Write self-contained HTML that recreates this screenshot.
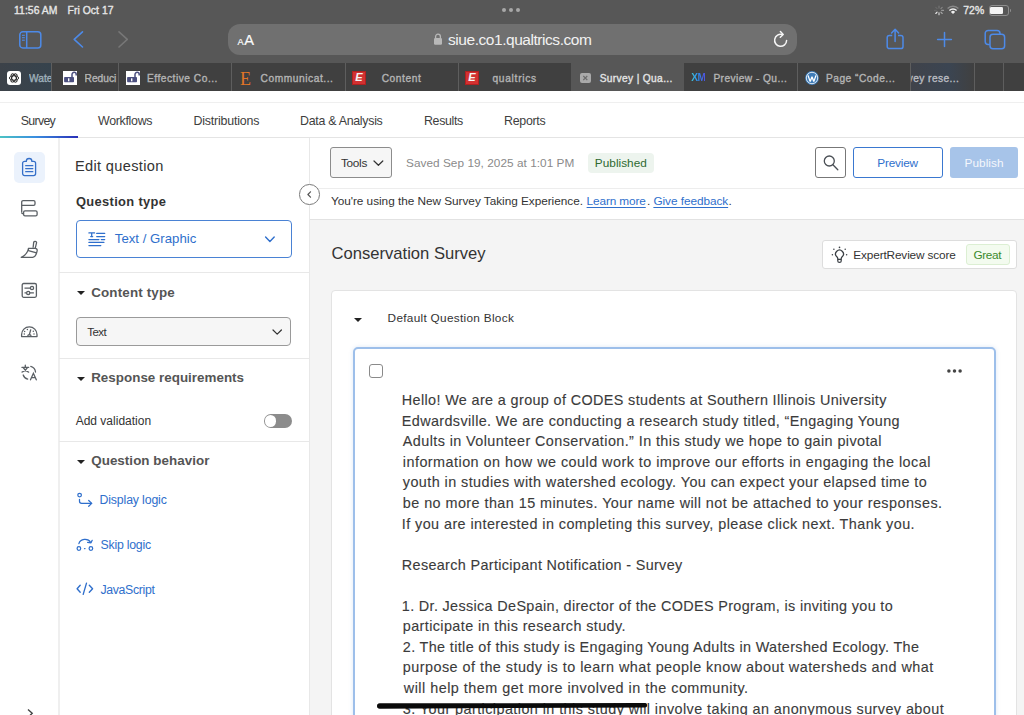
<!DOCTYPE html>
<html><head><meta charset="utf-8">
<style>
*{margin:0;padding:0;box-sizing:border-box}
html,body{width:1024px;height:715px;overflow:hidden;background:#fff;font-family:"Liberation Sans",sans-serif}
.a{position:absolute;white-space:nowrap;line-height:1}
.b{position:absolute}
svg{position:absolute;overflow:visible}
.hl{position:absolute;height:1px;background:#e6e6e6}
.vl{position:absolute;width:1px;background:#e6e6e6}
.sep{position:absolute;top:63px;width:1px;height:28px;background:#5e5e5e}
.tri{position:absolute;width:0;height:0;border-left:4px solid transparent;border-right:4px solid transparent;border-top:4px solid #222}
</style></head><body>
<!-- ============ SAFARI CHROME ============ -->
<div class="b" style="left:0;top:0;width:1024px;height:63px;background:#575757"></div>
<div class="b" style="left:0;top:63px;width:1024px;height:28px;background:#404040"></div>
<!-- first tab tint -->
<div class="b" style="left:0;top:63px;width:51px;height:28px;background:linear-gradient(90deg,#3c4249,#36434d)"></div>
<!-- active tab -->
<div class="b" style="left:571px;top:63px;width:113px;height:28px;background:#575757"></div>
<!-- dragged tab tint -->
<div class="b" style="left:911px;top:63px;width:63px;height:28px;background:linear-gradient(90deg,#40434a,#3b4552 60%,#404040)"></div>
<div class="sep" style="left:51px"></div>
<div class="sep" style="left:118px"></div>
<div class="sep" style="left:231px"></div>
<div class="sep" style="left:345px"></div>
<div class="sep" style="left:458px"></div>
<div class="sep" style="left:797px"></div>
<div class="sep" style="left:910px"></div>
<div class="sep" style="left:974px"></div>
<div class="sep" style="left:1003px"></div>
<!-- multitask dots -->
<div class="b" style="left:502px;top:8px;width:4px;height:4px;border-radius:2px;background:#a8a8a8"></div>
<div class="b" style="left:509px;top:8px;width:4px;height:4px;border-radius:2px;background:#a8a8a8"></div>
<div class="b" style="left:516px;top:8px;width:4px;height:4px;border-radius:2px;background:#a8a8a8"></div>
<!-- spinner -->
<svg style="left:934px;top:5px" width="10" height="11" viewBox="0 0 10 11">
 <g stroke-width="1.1" stroke-linecap="round">
  <line x1="5" y1="1" x2="5" y2="3" stroke="#777"/>
  <line x1="8.2" y1="2.3" x2="6.9" y2="3.6" stroke="#888"/>
  <line x1="9.5" y1="5.4" x2="7.6" y2="5.4" stroke="#999"/>
  <line x1="8.2" y1="8.5" x2="6.9" y2="7.2" stroke="#aaa"/>
  <line x1="5" y1="9.8" x2="5" y2="7.8" stroke="#ddd"/>
  <line x1="1.8" y1="8.5" x2="3.1" y2="7.2" stroke="#eee"/>
  <line x1="0.5" y1="5.4" x2="2.4" y2="5.4" stroke="#666"/>
  <line x1="1.8" y1="2.3" x2="3.1" y2="3.6" stroke="#6a6a6a"/>
 </g>
</svg>
<!-- wifi -->
<svg style="left:947px;top:6px" width="12" height="8" viewBox="0 0 12 8">
 <path d="M0.6 2.6 A7.5 7.5 0 0 1 11.4 2.6" fill="none" stroke="#8a8a8a" stroke-width="1.4"/>
 <path d="M2.4 4.5 A5 5 0 0 1 9.6 4.5" fill="none" stroke="#f0f0f0" stroke-width="1.4"/>
 <path d="M6 8 L3.9 5.9 A3 3 0 0 1 8.1 5.9 Z" fill="#f0f0f0"/>
</svg>
<!-- battery -->
<div class="b" style="left:988.5px;top:5px;width:20px;height:10.6px;border:1px solid #8e8e8e;border-radius:3px"></div>
<div class="b" style="left:990.3px;top:7.1px;width:12.5px;height:6.5px;background:#f4f4f4;border-radius:1.2px"></div>
<div class="b" style="left:1009.8px;top:8.6px;width:1.4px;height:3.2px;background:#8e8e8e;border-radius:0 1px 1px 0"></div>
<!-- sidebar icon -->
<svg style="left:18px;top:30px" width="25" height="19" viewBox="0 0 25 19">
 <g fill="none" stroke="#4d8ae8" stroke-width="1.5">
  <rect x="1.8" y="1.8" width="21" height="16.1" rx="3"/>
  <line x1="8.7" y1="1.8" x2="8.7" y2="17.9"/>
 </g>
 <g stroke="#4d8ae8" stroke-width="1.1">
  <line x1="4" y1="5.3" x2="6.8" y2="5.3"/><line x1="4" y1="7.7" x2="6.8" y2="7.7"/><line x1="4" y1="10.2" x2="6.8" y2="10.2"/>
 </g>
</svg>
<!-- back / forward -->
<svg style="left:72px;top:30px" width="12" height="19" viewBox="0 0 12 19">
 <path d="M10.5 1.8 L2.2 9.4 L10.5 17" fill="none" stroke="#4d8ae8" stroke-width="1.6" stroke-linecap="round" stroke-linejoin="round"/>
</svg>
<svg style="left:117px;top:30px" width="12" height="19" viewBox="0 0 12 19">
 <path d="M2 1.8 L10.3 9.4 L2 17" fill="none" stroke="#777" stroke-width="1.6" stroke-linecap="round" stroke-linejoin="round"/>
</svg>
<!-- url bar -->
<div class="b" style="left:227.5px;top:24px;width:569px;height:31px;background:#707070;border-radius:12px"></div>
<div class="a" style="left:237.5px;top:38px;font-size:9.2px;color:#fafafa;-webkit-text-stroke:0.2px #fafafa">A</div>
<div class="a" style="left:244.3px;top:33px;font-size:14.6px;color:#fafafa;-webkit-text-stroke:0.2px #fafafa">A</div>
<!-- lock -->
<svg style="left:433px;top:33px" width="10" height="12" viewBox="0 0 10 12">
 <path d="M2.6 5 V3.6 A2.4 2.4 0 0 1 7.4 3.6 V5" fill="none" stroke="#b8b8b8" stroke-width="1.3"/>
 <rect x="1" y="5" width="8" height="6.8" rx="1.2" fill="#b8b8b8"/>
</svg>
<!-- reload -->
<svg style="left:772px;top:30px" width="17" height="18" viewBox="0 0 17 18">
 <path d="M10.4 4.6 A6 6 0 1 0 14.6 10.5" fill="none" stroke="#f6f6f6" stroke-width="1.5" stroke-linecap="round"/>
 <path d="M8.4 1.6 L11.2 4.5 L8.3 7.2" fill="none" stroke="#f6f6f6" stroke-width="1.5" stroke-linecap="round" stroke-linejoin="round"/>
</svg>
<!-- share -->
<svg style="left:886px;top:28px" width="19" height="22" viewBox="0 0 19 22">
 <path d="M6.2 7.4 H3.4 A2.2 2.2 0 0 0 1.2 9.6 V18.4 A2.2 2.2 0 0 0 3.4 20.6 H14.8 A2.2 2.2 0 0 0 17 18.4 V9.6 A2.2 2.2 0 0 0 14.8 7.4 H12" fill="none" stroke="#4d8ae8" stroke-width="1.5"/>
 <path d="M9.1 13.6 V1.6 M5.6 5 L9.1 1.3 L12.6 5" fill="none" stroke="#4d8ae8" stroke-width="1.5" stroke-linecap="round" stroke-linejoin="round"/>
</svg>
<!-- plus -->
<svg style="left:936px;top:31px" width="17" height="17" viewBox="0 0 17 17">
 <path d="M8.5 1.6 V15.4 M1.6 8.5 H15.4" stroke="#4d8ae8" stroke-width="1.5" stroke-linecap="round"/>
</svg>
<!-- tabs -->
<svg style="left:984px;top:29px" width="22" height="21" viewBox="0 0 22 21">
 <path d="M5.8 15.6 H4.2 A3 3 0 0 1 1.2 12.6 V4.4 A3 3 0 0 1 4.2 1.4 H13 A3 3 0 0 1 16 4.4 V5.2" fill="none" stroke="#4d8ae8" stroke-width="1.5"/>
 <rect x="6" y="5.2" width="14.6" height="14.6" rx="3" fill="none" stroke="#4d8ae8" stroke-width="1.5"/>
</svg>
<!-- favicons -->
<div class="b" style="left:7px;top:70.6px;width:14px;height:14px;background:#fff;border-radius:3px"></div>
<svg style="left:7px;top:70.6px" width="14" height="14" viewBox="0 0 14 14">
 <g fill="none" stroke="#222" stroke-width="0.9">
  <ellipse cx="7" cy="7" rx="4.6" ry="2.2"/>
  <ellipse cx="7" cy="7" rx="4.6" ry="2.2" transform="rotate(60 7 7)"/>
  <ellipse cx="7" cy="7" rx="4.6" ry="2.2" transform="rotate(-60 7 7)"/>
 </g>
</svg>
<div class="b" style="left:63px;top:70.6px;width:14px;height:14px;background:#fff"></div>
<svg style="left:63px;top:70.6px" width="14" height="14" viewBox="0 0 14 14">
 <path d="M9 6 V3.4 A2.1 2.1 0 0 1 13.2 3.4 V4.6" fill="none" stroke="#4c5080" stroke-width="1.5"/>
 <rect x="1.1" y="5.9" width="9.9" height="5.4" rx="0.8" fill="#4c5080"/>
 <rect x="5" y="7.3" width="1.4" height="3" fill="#fff"/>
</svg>
<div class="b" style="left:125.5px;top:70.6px;width:14px;height:14px;background:#fff"></div>
<svg style="left:125.5px;top:70.6px" width="14" height="14" viewBox="0 0 14 14">
 <path d="M9 6 V3.4 A2.1 2.1 0 0 1 13.2 3.4 V4.6" fill="none" stroke="#4c5080" stroke-width="1.5"/>
 <rect x="1.1" y="5.9" width="9.9" height="5.4" rx="0.8" fill="#4c5080"/>
 <rect x="5" y="7.3" width="1.4" height="3" fill="#fff"/>
</svg>
<div class="a" style="left:240px;top:69.5px;font-family:'Liberation Serif',serif;font-size:18px;color:#e27526">E</div>
<div class="b" style="left:352px;top:70.6px;width:14px;height:14px;background:#d23131;border:1px solid #b02020"></div>
<div class="a" style="left:355.3px;top:72.4px;font-size:11px;font-weight:bold;font-style:italic;color:#f4f4f4">E</div>
<div class="b" style="left:465px;top:70.6px;width:14px;height:14px;background:#d23131;border:1px solid #b02020"></div>
<div class="a" style="left:468.3px;top:72.4px;font-size:11px;font-weight:bold;font-style:italic;color:#f4f4f4">E</div>
<div class="b" style="left:580px;top:73px;width:10.6px;height:10px;background:#a9a9a9;border-radius:2px"></div>
<svg style="left:580px;top:73px" width="11" height="10" viewBox="0 0 11 10">
 <path d="M3.3 3 L7.3 7 M7.3 3 L3.3 7" stroke="#6a6a6a" stroke-width="1.1"/>
</svg>
<div class="a" style="left:691.2px;top:73.2px;font-size:10.2px;font-weight:bold;letter-spacing:-0.6px;background:linear-gradient(90deg,#40c8d6,#2f8cf0 50%,#5050e0);-webkit-background-clip:text;background-clip:text;color:transparent">XM</div>
<svg style="left:804.8px;top:70.6px" width="14" height="14" viewBox="0 0 14 14">
 <circle cx="7" cy="7" r="6.9" fill="#3f7cb8"/>
 <circle cx="7" cy="7" r="5.7" fill="none" stroke="#fff" stroke-width="0.8"/>
 <path d="M3 4.4 L5.2 10.6 L7 5.8 L8.8 10.6 L11 4.4" fill="none" stroke="#fff" stroke-width="1.3" stroke-linejoin="bevel"/>
</svg>
<!-- ============ QUALTRICS ============ -->
<div class="hl" style="left:0;top:102px;width:1024px;background:#efefef"></div>
<div class="hl" style="left:0;top:137px;width:1024px;background:#e4e4e4"></div>
<div class="b" style="left:0;top:136.2px;width:78px;height:2px;background:linear-gradient(90deg,#4cc3c4,#3a8fe0 45%,#2a2fb8)"></div>
<!-- rail -->
<div class="vl" style="left:58px;top:138px;width:1.6px;height:577px;background:#efefef"></div>
<div class="b" style="left:14px;top:151.5px;width:31px;height:31px;background:#ebf2fc;border-radius:5px"></div>
<svg style="left:22px;top:158px" width="15" height="19" viewBox="0 0 15 19">
 <path d="M4.3 3.3 H2.6 A2 2 0 0 0 0.6 5.3 V15.6 A2 2 0 0 0 2.6 17.6 H11.6 A2 2 0 0 0 13.6 15.6 V5.3 A2 2 0 0 0 11.6 3.3 H9.9 A2.8 2.8 0 0 0 4.3 3.3 Z" fill="none" stroke="#3670c9" stroke-width="1.3"/>
 <path d="M3.7 7.7 H10.8 M3.7 10.6 H10.8 M3.7 13.7 H10.8" stroke="#3670c9" stroke-width="1.3" stroke-linecap="round"/>
</svg>
<svg style="left:16px;top:194px" width="28" height="28" viewBox="0 0 28 28">
 <g fill="none" stroke="#5a5f64" stroke-width="1.3">
  <path d="M5.7 18.5 V8 A1.4 1.4 0 0 1 7.1 6.6 H17.6 A1.4 1.4 0 0 1 19 8 V10 A1.4 1.4 0 0 1 17.6 11.4 H5.7"/>
  <path d="M5.7 18.5 A1.2 1.2 0 0 0 7.4 19.6"/>
  <rect x="7.6" y="16.9" width="13.5" height="5" rx="1.4"/>
 </g>
</svg>
<svg style="left:16px;top:236px" width="28" height="28" viewBox="0 0 28 28">
 <g fill="none" stroke="#5a5f64" stroke-width="1.3" stroke-linejoin="round">
  <path d="M17.1 11.8 L17.7 6.3 A1.5 1.5 0 0 1 20.6 6.6 L19.2 12.3"/>
  <path d="M12.4 12.4 L19.1 12.3 A2 2 0 0 1 21.2 14.6 L20.6 16.9 L12.4 14.7 Z"/>
  <path d="M12.4 13.4 Q10.4 19.4 5.2 21.3 H16.6 Q19.6 21 20.5 16.9"/>
 </g>
</svg>
<svg style="left:16px;top:276px" width="28" height="28" viewBox="0 0 28 28">
 <g fill="none" stroke="#5a5f64" stroke-width="1.3">
  <rect x="6.2" y="7.5" width="14.2" height="13.8" rx="1.5"/>
  <path d="M8.5 12.2 H14.3 M8.5 16.9 H10.5 M13.8 16.9 H17.9"/>
  <circle cx="16" cy="12" r="1.6"/>
  <circle cx="12.2" cy="16.9" r="1.6"/>
 </g>
</svg>
<svg style="left:16px;top:318px" width="28" height="28" viewBox="0 0 28 28">
 <g fill="none" stroke="#5a5f64" stroke-width="1.3" stroke-linejoin="round">
  <path d="M5.6 18.6 V16.6 A7.7 7.7 0 0 1 21 16.6 V18.6 Z"/>
  <path d="M13.3 16.8 L14.8 11.3"/>
  <path d="M11.6 18.6 L12.2 16.9 H14.6 L15.2 18.6"/>
 </g>
 <g fill="#5a5f64"><circle cx="8.6" cy="13.5" r="0.75"/><circle cx="11.4" cy="11.5" r="0.75"/><circle cx="17.3" cy="13.3" r="0.75"/><circle cx="8.3" cy="16.1" r="0.75"/><circle cx="18" cy="16" r="0.75"/></g>
</svg>
<svg style="left:16px;top:359px" width="28" height="28" viewBox="0 0 28 28">
 <g fill="none" stroke="#5a5f64" stroke-width="1.3" stroke-linecap="round">
  <path d="M9.3 6.2 V8.2 M5.9 8.3 H12.7 M7.2 8.6 Q9.5 12.3 12.6 13.2 M11.4 8.6 Q9.3 12.3 6 13.2"/>
  <path d="M14.8 7.4 A6.5 6.5 0 0 1 19.5 13"/>
  <path d="M7.2 16 A6.5 6.5 0 0 0 11.7 20.2"/>
  <path d="M14.5 20.8 L17.4 14.3 L20.3 20.8 M15.6 18.6 H19.2"/>
 </g>
</svg>
<!-- edit panel -->
<div class="vl" style="left:309px;top:138px;height:577px;background:#e8e8e8"></div>
<div class="b" style="left:75.5px;top:220.2px;width:216.5px;height:37.5px;border:1.2px solid #4a82d4;border-radius:4px"></div>
<svg style="left:84px;top:226px" width="28" height="28" viewBox="0 0 28 28">
 <g stroke="#2f6fcc" stroke-width="1.25" stroke-linecap="round" fill="none">
  <path d="M4.9 6.9 H10.6 M7.7 6.9 V10.6 M6.7 10.6 H8.7"/>
  <path d="M12.7 7.4 H20.7 M12.7 10.6 H20.7 M4.9 13.5 H14.9 M17.3 13.5 H20.7 M4.9 16.4 H19.9 M4.9 19.5 H16.8"/>
 </g>
</svg>
<svg style="left:264px;top:235px" width="12" height="9" viewBox="0 0 12 9">
 <path d="M1.6 2 L5.9 6.4 L10.2 2" fill="none" stroke="#2f6fcc" stroke-width="1.4" stroke-linecap="round" stroke-linejoin="round"/>
</svg>
<div class="hl" style="left:59px;top:272px;width:250px;background:#e8e8e8"></div>
<div class="tri" style="left:76.5px;top:291px"></div>
<div class="b" style="left:75.7px;top:316.5px;width:215.6px;height:29.7px;border:1px solid #9a9a9a;border-radius:4px;background:#f6f6f6"></div>
<svg style="left:271px;top:328px" width="12" height="9" viewBox="0 0 12 9">
 <path d="M2 2 L6.2 6.2 L10.4 2" fill="none" stroke="#333" stroke-width="1.2" stroke-linecap="round" stroke-linejoin="round"/>
</svg>
<div class="hl" style="left:59px;top:358px;width:250px;background:#e8e8e8"></div>
<div class="tri" style="left:76.5px;top:377.2px"></div>
<div class="b" style="left:264px;top:414.2px;width:27.6px;height:13.7px;border-radius:7px;background:#8c8c8c"></div>
<div class="b" style="left:265.2px;top:415.4px;width:11.3px;height:11.3px;border-radius:6px;background:#fff"></div>
<div class="hl" style="left:59px;top:441px;width:250px;background:#e8e8e8"></div>
<div class="tri" style="left:76.5px;top:460px"></div>
<svg style="left:72px;top:486px" width="28" height="28" viewBox="0 0 28 28">
 <g fill="none" stroke="#2f6fcc" stroke-width="1.25" stroke-linecap="round" stroke-linejoin="round">
  <circle cx="7.6" cy="9.1" r="1.8"/>
  <path d="M7.5 13.3 V15.2 A2.1 2.1 0 0 0 9.6 17.3 H19.6"/>
  <path d="M16.7 14.5 L19.7 17.4 L16.7 20.3"/>
 </g>
</svg>
<svg style="left:72px;top:530px" width="28" height="28" viewBox="0 0 28 28">
 <g fill="none" stroke="#2f6fcc" stroke-width="1.25" stroke-linecap="round" stroke-linejoin="round">
  <circle cx="6.9" cy="18.5" r="1.8"/>
  <circle cx="18.9" cy="18.5" r="1.8"/>
  <path d="M12.5 18.5 H13"/>
  <path d="M6.9 13.6 A6.3 5.5 0 0 1 18.6 12.3"/>
  <path d="M15.6 12.3 L19 12.8 L20.2 10.3"/>
 </g>
</svg>
<svg style="left:72px;top:575px" width="28" height="28" viewBox="0 0 28 28">
 <g fill="none" stroke="#2f6fcc" stroke-width="1.35" stroke-linecap="round" stroke-linejoin="round">
  <path d="M8.2 10.2 L5.1 13.7 L8.2 17.3"/>
  <path d="M14.5 8.1 L11.2 19.4"/>
  <path d="M17.3 10.2 L20.6 13.7 L17.3 17.3"/>
 </g>
</svg>
<div class="b" style="left:26.5px;top:707.5px;width:8px;height:8px;overflow:hidden">
<svg style="left:0;top:0" width="8" height="8" viewBox="0 0 8 8"><path d="M1 1.5 L5.2 5.2 L1.5 9" fill="none" stroke="#444" stroke-width="1.4"/></svg>
</div>
<!-- main header -->
<div class="hl" style="left:310px;top:188px;width:714px;background:#ededed"></div>
<div class="b" style="left:310px;top:219px;width:714px;height:496px;background:#f4f4f4"></div>
<div class="hl" style="left:310px;top:219px;width:714px;background:#e2e2e2"></div>
<div class="b" style="left:330.3px;top:147.4px;width:61.5px;height:30.3px;border:1px solid #8c8c8c;border-radius:3px;background:#f6f6f6"></div>
<svg style="left:372px;top:159px" width="12" height="9" viewBox="0 0 12 9">
 <path d="M2 2 L6.4 6.3 L10.8 2" fill="none" stroke="#333" stroke-width="1.2" stroke-linecap="round" stroke-linejoin="round"/>
</svg>
<div class="b" style="left:588px;top:152.7px;width:66px;height:20.3px;border-radius:4px;background:#edf4ee"></div>
<div class="b" style="left:815.3px;top:147.2px;width:30.7px;height:30.6px;border:1px solid #777;border-radius:3px;background:#fff"></div>
<svg style="left:818px;top:150px" width="26" height="26" viewBox="0 0 26 26">
 <circle cx="11.3" cy="11" r="5" fill="none" stroke="#4a4f55" stroke-width="1.3"/>
 <path d="M14.9 14.7 L19.8 19.7" stroke="#4a4f55" stroke-width="1.3" stroke-linecap="round"/>
</svg>
<div class="b" style="left:853.2px;top:147.2px;width:89.7px;height:30.6px;border:1.2px solid #3a78d0;border-radius:3px;background:#fff"></div>
<div class="b" style="left:950px;top:147.2px;width:67.7px;height:30.6px;border-radius:3px;background:#a7c4e9"></div>
<!-- collapse circle -->
<div class="b" style="left:299.2px;top:184px;width:20.6px;height:20.6px;border:1px solid #7a7a7a;border-radius:50%;background:#fff"></div>
<svg style="left:296px;top:182px" width="28" height="28" viewBox="0 0 28 28">
 <path d="M14.5 9.8 L11.9 12.5 L14.5 15.2" fill="none" stroke="#555" stroke-width="1.2" stroke-linecap="round" stroke-linejoin="round"/>
</svg>
<!-- expert review -->
<div class="b" style="left:821.9px;top:240.3px;width:195.6px;height:28.6px;border:1px solid #dddddd;border-radius:3px;background:#fff"></div>
<svg style="left:826px;top:242px" width="26" height="26" viewBox="0 0 26 26">
 <g fill="none" stroke="#3a3f44" stroke-width="1.25" stroke-linejoin="round">
  <path d="M11.8 17.4 V16.6 Q11.6 15.4 10.6 14.6 A3.9 3.9 0 1 1 16.4 14.6 Q15.4 15.4 15.2 16.6 V17.4 Z"/>
  <path d="M11.8 17.4 V19 A1.7 1.5 0 0 0 15.2 19 V17.4"/>
 </g>
 <g fill="#3a3f44"><circle cx="13.5" cy="5.4" r="0.8"/><circle cx="7.9" cy="7.2" r="0.75"/><circle cx="19.2" cy="7.2" r="0.75"/><circle cx="6.4" cy="12.8" r="0.75"/><circle cx="20.6" cy="12.8" r="0.75"/></g>
</svg>
<div class="b" style="left:966px;top:243.8px;width:44px;height:21.5px;border:1px solid #dcefd3;border-radius:3px;background:#f3fbef"></div>
<!-- block card -->
<div class="b" style="left:330.7px;top:289.6px;width:686.8px;height:450px;border:1px solid #e3e3e3;border-radius:4px;background:#fff"></div>
<div class="tri" style="left:353.5px;top:318.3px"></div>
<div class="b" style="left:352.5px;top:347.2px;width:643px;height:420px;border:2px solid #9dbfea;border-radius:5px;box-shadow:0 0 4px rgba(120,160,220,0.25);background:#fff"></div>
<div class="b" style="left:369.4px;top:364px;width:14.1px;height:13.6px;border:1px solid #8a8a8a;border-radius:3px"></div>
<svg style="left:946px;top:368px" width="17" height="6" viewBox="0 0 17 6"><g fill="#444"><circle cx="2.9" cy="2.9" r="1.75"/><circle cx="8.5" cy="2.9" r="1.75"/><circle cx="14.1" cy="2.9" r="1.75"/></g></svg>
<div class="a" style="left:14.10px;top:6.00px;font-size:10.4px;color:#e6e6e6;letter-spacing:0.022px;-webkit-text-stroke:0.35px currentColor;">11:56 AM</div>
<div class="a" style="left:67.50px;top:6.00px;font-size:10.4px;color:#e6e6e6;letter-spacing:0.041px;-webkit-text-stroke:0.35px currentColor;">Fri Oct 17</div>
<div class="a" style="left:963.20px;top:6.00px;font-size:10.4px;color:#e6e6e6;letter-spacing:0.121px;-webkit-text-stroke:0.35px currentColor;">72%</div>
<div class="a" style="left:448.00px;top:32.00px;font-size:15.5px;color:#f2f2f2;letter-spacing:-0.449px;">siue.co1.qualtrics.com</div>
<div class="a" style="left:29.00px;top:74.00px;font-size:10.2px;color:#9fb0ba;-webkit-text-stroke:0.35px currentColor;width:22.0px;overflow:hidden;">Wate</div>
<div class="a" style="left:84.60px;top:74.00px;font-size:10.2px;color:#b4b4b4;-webkit-text-stroke:0.35px currentColor;width:34.0px;overflow:hidden;">Reduci</div>
<div class="a" style="left:146.90px;top:74.00px;font-size:10.2px;color:#b4b4b4;letter-spacing:0.522px;-webkit-text-stroke:0.35px currentColor;">Effective Co...</div>
<div class="a" style="left:260.50px;top:74.00px;font-size:10.2px;color:#b4b4b4;letter-spacing:0.563px;-webkit-text-stroke:0.35px currentColor;">Communicat...</div>
<div class="a" style="left:381.70px;top:74.00px;font-size:10.2px;color:#b4b4b4;letter-spacing:0.575px;-webkit-text-stroke:0.35px currentColor;">Content</div>
<div class="a" style="left:492.50px;top:74.00px;font-size:10.2px;color:#b4b4b4;letter-spacing:0.707px;-webkit-text-stroke:0.35px currentColor;">qualtrics</div>
<div class="a" style="left:599.70px;top:74.00px;font-size:10.2px;color:#e4e4e4;letter-spacing:0.348px;-webkit-text-stroke:0.35px currentColor;">Survey | Qua...</div>
<div class="a" style="left:713.40px;top:74.00px;font-size:10.2px;color:#b4b4b4;letter-spacing:0.433px;-webkit-text-stroke:0.35px currentColor;">Preview - Qu...</div>
<div class="a" style="left:826.00px;top:74.00px;font-size:10.2px;color:#b4b4b4;letter-spacing:0.497px;-webkit-text-stroke:0.35px currentColor;">Page “Code...</div>
<div class="a" style="left:907.80px;top:74.00px;font-size:10.2px;color:#b9bcc2;letter-spacing:0.404px;-webkit-text-stroke:0.35px currentColor;clip-path:inset(-6px -6px -6px 3.4px);">vey rese...</div>
<div class="a" style="left:20.80px;top:115.00px;font-size:12.4px;color:#3e3e3e;letter-spacing:-0.714px;">Survey</div>
<div class="a" style="left:98.00px;top:115.00px;font-size:12.4px;color:#3e3e3e;letter-spacing:-0.302px;">Workflows</div>
<div class="a" style="left:193.40px;top:115.00px;font-size:12.4px;color:#3e3e3e;letter-spacing:-0.181px;">Distributions</div>
<div class="a" style="left:300.00px;top:115.00px;font-size:12.4px;color:#3e3e3e;letter-spacing:-0.283px;">Data &amp; Analysis</div>
<div class="a" style="left:424.00px;top:115.00px;font-size:12.4px;color:#3e3e3e;letter-spacing:-0.353px;">Results</div>
<div class="a" style="left:504.00px;top:115.00px;font-size:12.4px;color:#3e3e3e;letter-spacing:-0.282px;">Reports</div>
<div class="a" style="left:75.00px;top:159.00px;font-size:14.6px;color:#333;letter-spacing:0.328px;">Edit question</div>
<div class="a" style="left:76.00px;top:196.00px;font-size:12.9px;color:#333;font-weight:bold;letter-spacing:0.327px;">Question type</div>
<div class="a" style="left:114.80px;top:232.00px;font-size:13.2px;color:#2f6fcc;letter-spacing:0.011px;">Text / Graphic</div>
<div class="a" style="left:91.20px;top:286.00px;font-size:13.4px;color:#555;font-weight:bold;letter-spacing:0.156px;">Content type</div>
<div class="a" style="left:87.20px;top:327.00px;font-size:11.5px;color:#333;letter-spacing:-0.532px;">Text</div>
<div class="a" style="left:91.20px;top:371.00px;font-size:13.4px;color:#555;font-weight:bold;letter-spacing:0.015px;">Response requirements</div>
<div class="a" style="left:75.70px;top:415.00px;font-size:12px;color:#333;">Add validation</div>
<div class="a" style="left:91.20px;top:454.00px;font-size:13.4px;color:#555;font-weight:bold;letter-spacing:0.047px;">Question behavior</div>
<div class="a" style="left:99.50px;top:494.00px;font-size:12.3px;color:#2f6fcc;letter-spacing:-0.140px;">Display logic</div>
<div class="a" style="left:100.50px;top:539.00px;font-size:12.3px;color:#2f6fcc;letter-spacing:-0.220px;">Skip logic</div>
<div class="a" style="left:100.50px;top:584.00px;font-size:12.3px;color:#2f6fcc;letter-spacing:-0.343px;">JavaScript</div>
<div class="a" style="left:341.00px;top:158.00px;font-size:11.8px;color:#333;letter-spacing:-0.310px;">Tools</div>
<div class="a" style="left:406.00px;top:158.00px;font-size:11.8px;color:#8a8a8a;letter-spacing:0.039px;">Saved Sep 19, 2025 at 1:01 PM</div>
<div class="a" style="left:594.80px;top:158.00px;font-size:11.8px;color:#2e6a31;letter-spacing:0.031px;">Published</div>
<div class="a" style="left:877.20px;top:158.00px;font-size:11.8px;color:#2f6fcc;letter-spacing:-0.173px;">Preview</div>
<div class="a" style="left:964.50px;top:158.00px;font-size:11.8px;color:#f4f7fc;letter-spacing:0.062px;">Publish</div>
<div class="a" style="left:330.90px;top:196.00px;font-size:11.8px;color:#333;letter-spacing:-0.030px;">You're using the New Survey Taking Experience.</div>
<div class="a" style="left:586.60px;top:196.00px;font-size:11.8px;color:#2f6fcc;letter-spacing:-0.118px;text-decoration:underline;text-underline-offset:2px;">Learn more</div>
<div class="a" style="left:647.00px;top:196.00px;font-size:11.8px;color:#333;">.</div>
<div class="a" style="left:653.40px;top:196.00px;font-size:11.8px;color:#2f6fcc;letter-spacing:-0.051px;text-decoration:underline;text-underline-offset:2px;">Give feedback</div>
<div class="a" style="left:728.50px;top:196.00px;font-size:11.8px;color:#333;">.</div>
<div class="a" style="left:331.50px;top:246.00px;font-size:16.6px;color:#333;">Conservation Survey</div>
<div class="a" style="left:853.30px;top:250.00px;font-size:11.8px;color:#333;letter-spacing:-0.138px;">ExpertReview score</div>
<div class="a" style="left:973.40px;top:250.00px;font-size:11.8px;color:#3b8a2e;letter-spacing:-0.332px;">Great</div>
<div class="a" style="left:387.60px;top:313.00px;font-size:11.8px;color:#333;letter-spacing:0.295px;">Default Question Block</div>
<div class="a" style="left:401.80px;top:393.00px;font-size:14.4px;color:#3b3b3b;letter-spacing:0.368px;-webkit-text-stroke:0.12px currentColor;">Hello! We are a group of CODES students at Southern Illinois University</div>
<div class="a" style="left:401.80px;top:414.00px;font-size:14.4px;color:#3b3b3b;letter-spacing:0.378px;-webkit-text-stroke:0.12px currentColor;">Edwardsville. We are conducting a research study titled, “Engaging Young</div>
<div class="a" style="left:402.80px;top:434.00px;font-size:14.4px;color:#3b3b3b;letter-spacing:0.410px;-webkit-text-stroke:0.12px currentColor;">Adults in Volunteer Conservation.” In this study we hope to gain pivotal</div>
<div class="a" style="left:402.80px;top:455.00px;font-size:14.4px;color:#3b3b3b;letter-spacing:0.462px;-webkit-text-stroke:0.12px currentColor;">information on how we could work to improve our efforts in engaging the local</div>
<div class="a" style="left:402.80px;top:475.00px;font-size:14.4px;color:#3b3b3b;letter-spacing:0.430px;-webkit-text-stroke:0.12px currentColor;">youth in studies with watershed ecology. You can expect your elapsed time to</div>
<div class="a" style="left:402.80px;top:496.00px;font-size:14.4px;color:#3b3b3b;letter-spacing:0.443px;-webkit-text-stroke:0.12px currentColor;">be no more than 15 minutes. Your name will not be attached to your responses.</div>
<div class="a" style="left:401.80px;top:517.00px;font-size:14.4px;color:#3b3b3b;letter-spacing:0.423px;-webkit-text-stroke:0.12px currentColor;">If you are interested in completing this survey, please click next. Thank you.</div>
<div class="a" style="left:401.80px;top:558.00px;font-size:14.4px;color:#3b3b3b;letter-spacing:0.343px;-webkit-text-stroke:0.12px currentColor;">Research Participant Notification - Survey</div>
<div class="a" style="left:401.80px;top:599.00px;font-size:14.4px;color:#3b3b3b;letter-spacing:0.342px;-webkit-text-stroke:0.12px currentColor;">1. Dr. Jessica DeSpain, director of the CODES Program, is inviting you to</div>
<div class="a" style="left:402.80px;top:619.00px;font-size:14.4px;color:#3b3b3b;letter-spacing:0.394px;-webkit-text-stroke:0.12px currentColor;">participate in this research study.</div>
<div class="a" style="left:402.80px;top:640.00px;font-size:14.4px;color:#3b3b3b;letter-spacing:0.356px;-webkit-text-stroke:0.12px currentColor;">2. The title of this study is Engaging Young Adults in Watershed Ecology. The</div>
<div class="a" style="left:402.80px;top:660.00px;font-size:14.4px;color:#3b3b3b;letter-spacing:0.465px;-webkit-text-stroke:0.12px currentColor;">purpose of the study is to learn what people know about watersheds and what</div>
<div class="a" style="left:403.80px;top:681.00px;font-size:14.4px;color:#3b3b3b;letter-spacing:0.486px;-webkit-text-stroke:0.12px currentColor;">will help them get more involved in the community.</div>
<div class="a" style="left:402.80px;top:702.00px;font-size:14.4px;color:#3b3b3b;letter-spacing:0.431px;-webkit-text-stroke:0.12px currentColor;">3. Your participation in this study will involve taking an anonymous survey about</div>
<!-- home indicator -->
<svg style="left:370px;top:698px" width="285" height="14" viewBox="0 0 285 14"><path d="M9.7 5.3 L275 5.1 A2.2 2.2 0 0 1 275 9.5 L9.7 10.7 A2.7 2.7 0 0 1 9.7 5.3 Z" fill="#0a0a0a"/></svg>
</body></html>
